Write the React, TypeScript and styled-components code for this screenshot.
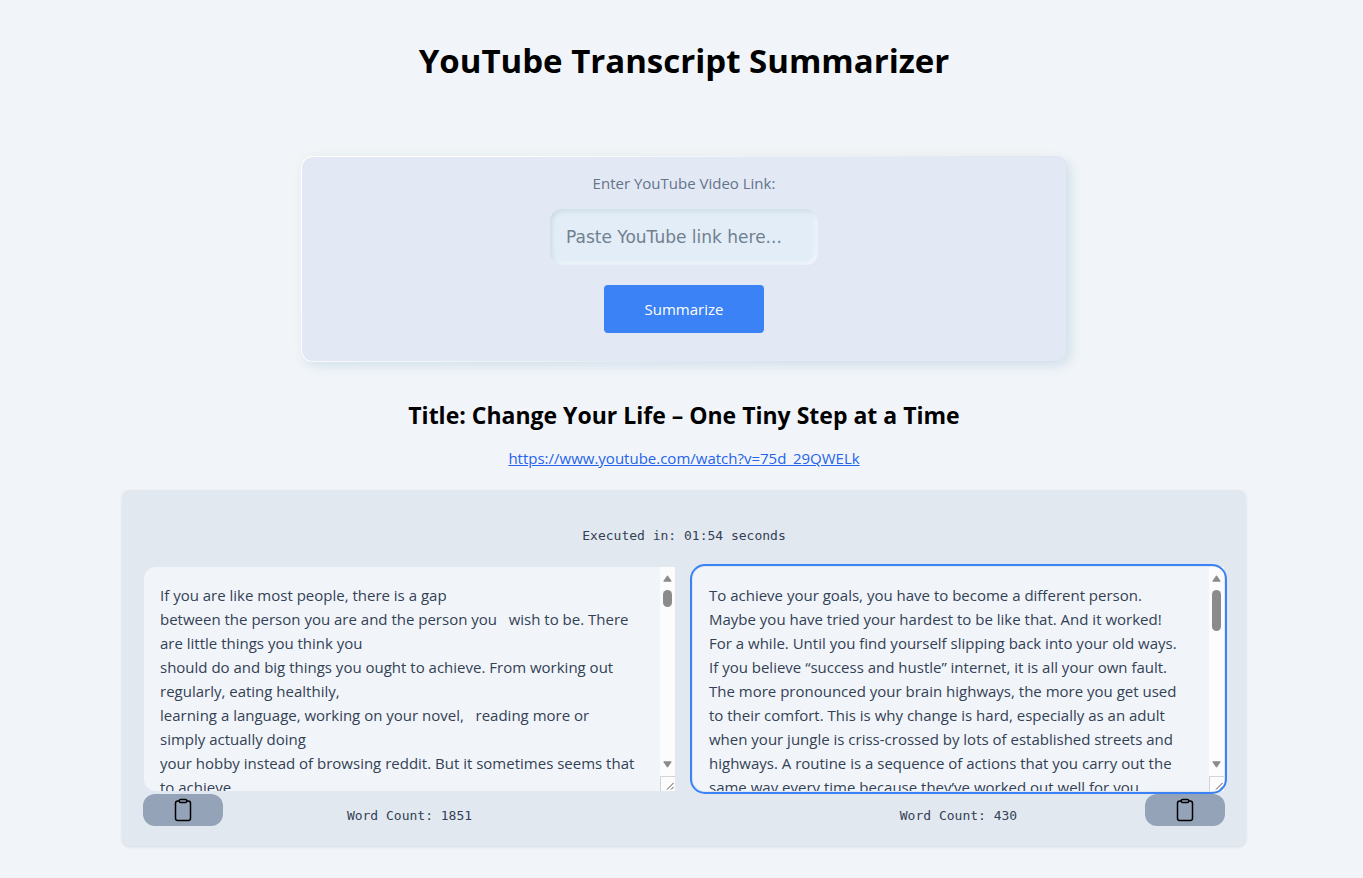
import React from "react";
import styled, { createGlobalStyle } from "styled-components";
import { IoClipboardOutline } from "react-icons/io5";

const GlobalStyle = createGlobalStyle`
  *, *::before, *::after { box-sizing: border-box; }
  body {
    margin: 0;
    background: #f1f5f9;
    color: #000;
    font-family: "Open Sans", "Noto Sans", sans-serif;
    font-size: 15px;
    line-height: 24px;
  }
`;

const Page = styled.main`
  display: flex;
  flex-direction: column;
  align-items: center;
  min-height: 100vh;
  padding: 40px 0 31px 5px;
`;

const PageTitle = styled.h1`
  margin: 0 0 74px;
  font-size: 33px;
  line-height: 42px;
  font-weight: 700;
`;

const LinkForm = styled.form`
  display: flex;
  flex-direction: column;
  align-items: center;
  width: 100%;
  max-width: 766px;
  padding: 14px 16px 28px;
  border: 1px solid transparent;
  border-radius: 12px;
  background:
    linear-gradient(#e2e8f4, #e2e8f4) padding-box,
    linear-gradient(145deg, #ffffff 20%, #d8e3ee 75%) border-box;
  box-shadow: 4px 4px 12px #d3e0ea, -4px -4px 14px #f2f4f4;
`;

const FieldLabel = styled.label`
  margin-bottom: 14px;
  color: #64748b;
`;

const LinkInput = styled.input`
  width: 268px;
  height: 56px;
  margin-bottom: 20px;
  padding: 0 16px;
  border: 0;
  border-radius: 12px;
  outline: 0;
  background: #e2edf7;
  box-shadow: inset 2px 2px 5px #cbdae6, inset -2px -2px 4px #f6f9fd;
  color: #475569;
  font-family: "DejaVu Sans", sans-serif;
  font-size: 17px;

  &::placeholder {
    color: #71808f;
    opacity: 1;
  }
`;

const SubmitButton = styled.button`
  width: 160px;
  height: 48px;
  border: 0;
  border-radius: 4px;
  background: #3b82f6;
  color: #fff;
  font: inherit;
  cursor: pointer;
`;

const VideoTitle = styled.h2`
  margin: 37px 0 15px;
  font-size: 23px;
  line-height: 32px;
  font-weight: 700;
`;

const VideoLink = styled.a`
  margin-bottom: 20px;
  color: #2563eb;
  text-decoration: underline;
`;

const ResultPanel = styled.section`
  width: 100%;
  max-width: 1124px;
  padding: 34px 21px 18px;
  border-radius: 8px;
  background: #e2e8f0;
  box-shadow: 0 1px 3px rgba(15, 23, 42, 0.12);
`;

const Stat = styled.p`
  margin: 0;
  color: #334155;
  font-family: "DejaVu Sans Mono", monospace;
  font-size: 13px;
  line-height: 24px;
  text-align: center;
`;

const Columns = styled.div`
  display: grid;
  grid-template-columns: 1fr 1fr;
  gap: 16px;
  margin-top: 19px;
`;

const Column = styled.div`
  min-width: 0;
`;

const TextFrame = styled.div<{ $active?: boolean }>`
  display: flex;
  height: 224px;
  margin: 0 1px 3px;
  border-radius: 12px 0 0 12px;
  background: #f1f5f9;
  ${(p) => p.$active && `
    border-radius: 12px;
    outline: 2px solid #3b82f6;
    outline-offset: 1px;
  `}
`;

const TextBox = styled.textarea`
  flex: 1;
  min-width: 0;
  height: 100%;
  padding: 16px 0 0 16px;
  border: 0;
  outline: 0;
  resize: none;
  overflow: hidden;
  white-space: pre;
  background: transparent;
  color: #334155;
  font: inherit;
`;

const ScrollRail = styled.div`
  display: flex;
  flex-direction: column;
  align-items: center;
  width: 15px;
  padding-top: 8px;
  background: #fcfcfc;
`;

const Thumb = styled.span<{ $size: number }>`
  width: 9px;
  height: ${(p) => p.$size}px;
  margin: 8px 0 auto;
  border-radius: 5px;
  background: #8b8b8b;
`;

const Grip = styled.svg`
  display: block;
  margin-top: 8px;
`;

const Footer = styled.div<{ $mirrored?: boolean }>`
  display: grid;
  grid-template-columns: 80px 1fr 80px;
  align-items: start;

  ${Stat} {
    grid-area: 1 / 2;
    padding-top: 10px;
  }

  button {
    grid-area: 1 / ${(p) => (p.$mirrored ? 3 : 1)};
  }
`;

const CopyButton = styled.button`
  display: flex;
  align-items: center;
  justify-content: center;
  height: 32px;
  padding: 0;
  border: 0;
  border-radius: 12px;
  background: #94a3b8;
  color: #000;
  cursor: pointer;
`;

const transcript = `If you are like most people, there is a gap
between the person you are and the person you   wish to be. There
are little things you think you
should do and big things you ought to achieve. From working out
regularly, eating healthily,
learning a language, working on your novel,   reading more or
simply actually doing
your hobby instead of browsing reddit. But it sometimes seems that
to achieve`;

const summary = `To achieve your goals, you have to become a different person.
Maybe you have tried your hardest to be like that. And it worked!
For a while. Until you find yourself slipping back into your old ways.
If you believe “success and hustle” internet, it is all your own fault.
The more pronounced your brain highways, the more you get used
to their comfort. This is why change is hard, especially as an adult
when your jungle is criss-crossed by lots of established streets and
highways. A routine is a sequence of actions that you carry out the
same way every time because they’ve worked out well for you`;

interface ResultProps {
  label: string;
  text: string;
  words: number;
  thumb: number;
  active?: boolean;
  mirrored?: boolean;
}

function Result({ label, text, words, thumb, active, mirrored }: ResultProps) {
  return (
    <Column>
      <TextFrame $active={active}>
        <TextBox aria-label={label} defaultValue={text} spellCheck={false} />
        <ScrollRail aria-hidden="true">
          <svg width="9" height="7" viewBox="0 0 9 7">
            <path d="M4.5 0.8 8.2 6.2H0.8Z" fill="#8b8b8b" stroke="#8b8b8b" strokeLinejoin="round" />
          </svg>
          <Thumb $size={thumb} />
          <svg width="9" height="7" viewBox="0 0 9 7">
            <path d="M4.5 6.2 8.2 0.8H0.8Z" fill="#8b8b8b" stroke="#8b8b8b" strokeLinejoin="round" />
          </svg>
          <Grip width="15" height="15" viewBox="0 0 15 15">
            <path d="M0.5 15V0.5H15" fill="none" stroke="#d4d4d4" />
            <path d="M7 13.5 13.5 7M11 13.5 13.5 11" fill="none" stroke="#555" />
          </Grip>
        </ScrollRail>
      </TextFrame>
      <Footer $mirrored={mirrored}>
        <CopyButton type="button" aria-label={`Copy ${label}`}>
          <IoClipboardOutline size={24} />
        </CopyButton>
        <Stat>Word Count: {words}</Stat>
      </Footer>
    </Column>
  );
}

export default function App() {
  return (
    <>
      <GlobalStyle />
      <Page>
        <PageTitle>YouTube Transcript Summarizer</PageTitle>
        <LinkForm onSubmit={(e) => e.preventDefault()}>
          <FieldLabel htmlFor="video-link">Enter YouTube Video Link:</FieldLabel>
          <LinkInput id="video-link" type="text" placeholder="Paste YouTube link here..." />
          <SubmitButton type="submit">Summarize</SubmitButton>
        </LinkForm>
        <VideoTitle>Title: Change Your Life – One Tiny Step at a Time</VideoTitle>
        <VideoLink href="https://www.youtube.com/watch?v=75d_29QWELk">
          https://www.youtube.com/watch?v=75d_29QWELk
        </VideoLink>
        <ResultPanel>
          <Stat>Executed in: 01:54 seconds</Stat>
          <Columns>
            <Result label="transcript" text={transcript} words={1851} thumb={17} />
            <Result label="summary" text={summary} words={430} thumb={41} active mirrored />
          </Columns>
        </ResultPanel>
      </Page>
    </>
  );
}
